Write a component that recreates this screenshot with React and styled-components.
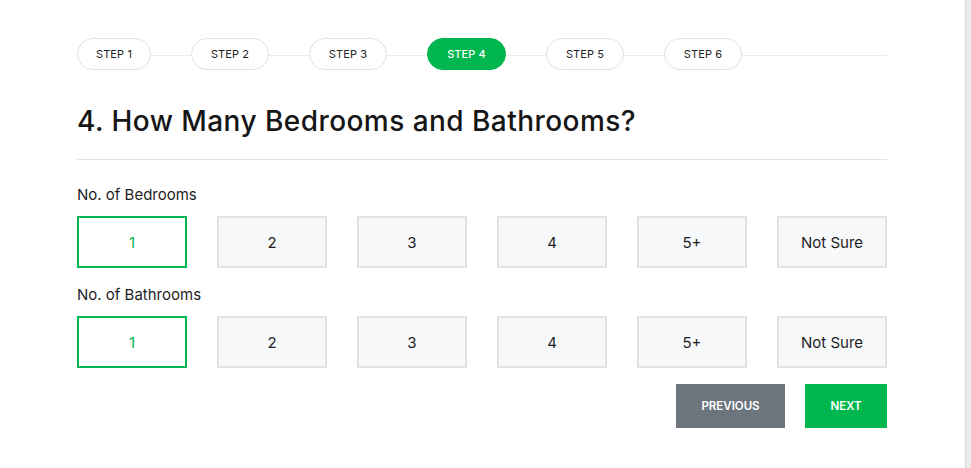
import React, { useState } from "react";
import styled, { createGlobalStyle } from "styled-components";

const GlobalStyle = createGlobalStyle`
  html, body {
    margin: 0;
    padding: 0;
    background: #fff;
  }
  body {
    font-family: "Inter", "Noto Sans", sans-serif;
    color: #1d1d1f;
  }
`;

const Page = styled.div`
  display: flex;
  width: 971px;
  height: 468px;
  overflow: hidden;
`;

const Main = styled.div`
  flex: 1;
  padding: 38px 0 0 77px;
`;

const EdgeStrip = styled.div`
  width: 5px;
  background: #ebebeb;
  border-left: 1px solid #dcdcdc;
`;

const Wizard = styled.div`
  width: 810px;
`;

const Steps = styled.div`
  position: relative;
  display: flex;
  gap: 40px;
  height: 32px;

  &::before {
    content: "";
    position: absolute;
    left: 0;
    right: 0;
    top: 17px;
    height: 1px;
    background: #e9ebef;
  }
`;

const StepPill = styled.div`
  position: relative;
  z-index: 1;
  width: ${(p) => p.$w}px;
  height: 32px;
  box-sizing: border-box;
  border-radius: 16px;
  border: 1px solid ${(p) => (p.$active ? "#00b74f" : "#dfe2e7")};
  background: ${(p) => (p.$active ? "#00b74f" : "#fff")};
  color: ${(p) => (p.$active ? "#fff" : "#222")};
  display: flex;
  align-items: center;
  justify-content: center;
  font-size: 11px;
  font-weight: ${(p) => (p.$active ? 500 : 400)};
  letter-spacing: 0.1px;
`;

const Title = styled.h1`
  margin: 32px 0 0;
  font-size: 28px;
  font-weight: 500;
  line-height: 38px;
  color: #161616;
  letter-spacing: 0.45px;
`;

const Divider = styled.hr`
  margin: 19px 0 0;
  border: 0;
  height: 1px;
  background: #e3e4e6;
`;

const Label = styled.div`
  margin-top: ${(p) => p.$top}px;
  font-size: 15px;
  font-weight: 400;
  line-height: 20px;
  color: #1d1d1f;
`;

const OptionRow = styled.div`
  margin-top: 11px;
  display: grid;
  grid-template-columns: repeat(6, 110px);
  gap: 30px;
`;

const Option = styled.button`
  height: 52px;
  box-sizing: border-box;
  border: 2px solid ${(p) => (p.$selected ? "#00b74f" : "#e0e2e6")};
  background: ${(p) => (p.$selected ? "#fff" : "#f7f8fa")};
  color: ${(p) => (p.$selected ? "#00b74f" : "#1d1d1f")};
  font-family: inherit;
  font-size: 15px;
  font-weight: 400;
  padding: 0;
  cursor: pointer;
`;

const Actions = styled.div`
  margin-top: 16px;
  display: flex;
  justify-content: flex-end;
  gap: 20px;
`;

const ActionButton = styled.button`
  width: ${(p) => p.$w}px;
  height: 44px;
  border: 0;
  background: ${(p) => (p.$primary ? "#00b74f" : "#6c757d")};
  color: #fff;
  font-family: inherit;
  font-size: 11.5px;
  font-weight: 600;
  text-transform: uppercase;
  cursor: pointer;
`;

const steps = [
  { label: "STEP 1", w: 74 },
  { label: "STEP 2", w: 78 },
  { label: "STEP 3", w: 78 },
  { label: "STEP 4", w: 79 },
  { label: "STEP 5", w: 78 },
  { label: "STEP 6", w: 78 },
];

const options = ["1", "2", "3", "4", "5+", "Not Sure"];

function OptionGroup({ value, onChange }) {
  return (
    <OptionRow>
      {options.map((o) => (
        <Option key={o} $selected={value === o} onClick={() => onChange(o)}>
          {o}
        </Option>
      ))}
    </OptionRow>
  );
}

export default function App() {
  const [bedrooms, setBedrooms] = useState("1");
  const [bathrooms, setBathrooms] = useState("1");

  return (
    <Page>
      <GlobalStyle />
      <Main>
        <Wizard>
          <Steps>
            {steps.map((s, i) => (
              <StepPill key={s.label} $w={s.w} $active={i === 3}>
                {s.label}
              </StepPill>
            ))}
          </Steps>
          <Title>4. How Many Bedrooms and Bathrooms?</Title>
          <Divider />
          <Label $top={25}>No. of Bedrooms</Label>
          <OptionGroup value={bedrooms} onChange={setBedrooms} />
          <Label $top={17}>No. of Bathrooms</Label>
          <OptionGroup value={bathrooms} onChange={setBathrooms} />
          <Actions>
            <ActionButton $w={109}>Previous</ActionButton>
            <ActionButton $w={82} $primary>
              Next
            </ActionButton>
          </Actions>
        </Wizard>
      </Main>
      <EdgeStrip />
    </Page>
  );
}
